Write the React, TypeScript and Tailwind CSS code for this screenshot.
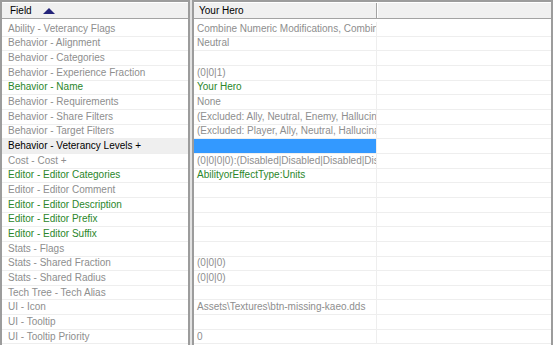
const GRAY = 'text-[#8e8e8e]'
const GREEN = 'text-[#2a862a]'

type Row = { field: string; value: string; changed?: boolean; selected?: boolean }

const ROWS: Row[] = [
  { field: 'Ability - Veterancy Flags', value: 'Combine Numeric Modifications, Combine Numeric Modifications' },
  { field: 'Behavior - Alignment', value: 'Neutral' },
  { field: 'Behavior - Categories', value: '' },
  { field: 'Behavior - Experience Fraction', value: '(0|0|1)' },
  { field: 'Behavior - Name', value: 'Your Hero', changed: true },
  { field: 'Behavior - Requirements', value: 'None' },
  { field: 'Behavior - Share Filters', value: '(Excluded: Ally, Neutral, Enemy, Hallucination)' },
  { field: 'Behavior - Target Filters', value: '(Excluded: Player, Ally, Neutral, Hallucination)' },
  { field: 'Behavior - Veterancy Levels +', value: '', selected: true },
  { field: 'Cost - Cost +', value: '(0|0|0|0):(Disabled|Disabled|Disabled|Disabled)' },
  { field: 'Editor - Editor Categories', value: 'AbilityorEffectType:Units', changed: true },
  { field: 'Editor - Editor Comment', value: '' },
  { field: 'Editor - Editor Description', value: '', changed: true },
  { field: 'Editor - Editor Prefix', value: '', changed: true },
  { field: 'Editor - Editor Suffix', value: '', changed: true },
  { field: 'Stats - Flags', value: '' },
  { field: 'Stats - Shared Fraction', value: '(0|0|0)' },
  { field: 'Stats - Shared Radius', value: '(0|0|0)' },
  { field: 'Tech Tree - Tech Alias', value: '' },
  { field: 'UI - Icon', value: 'Assets\\Textures\\btn-missing-kaeo.dds' },
  { field: 'UI - Tooltip', value: '' },
  { field: 'UI - Tooltip Priority', value: '0' },
]

function textColor(r: Row) {
  if (r.selected) return 'text-black'
  return r.changed ? GREEN : GRAY
}

export default function App() {
  return (
    <div
      className="w-[556px] h-[345px] overflow-hidden bg-white flex text-[10px] leading-none"
      style={{ fontFamily: '"Liberation Sans", Arial, sans-serif' }}
    >
      {/* field list */}
      <div className="w-[190px] shrink-0 flex flex-col border-l-2 border-r-2 border-t-2 border-[#9c9c9c]">
        <div className="h-[17px] shrink-0 flex items-center bg-[#f0f0f0] border-t border-white border-b border-b-[#a3a3a3] pl-[8px] text-black">
          <span>Field</span>
          <svg width="12" height="6" viewBox="0 0 12 6" className="ml-[11px]">
            <polygon points="0,6 6,0 12,6" fill="#24247a" />
          </svg>
        </div>
        <div className="pt-[3px] flex flex-col">
          {ROWS.map(r => (
            <div
              key={r.field}
              className={`h-[14.67px] shrink-0 flex items-center pl-[6px] border-b border-[#eeeeee] whitespace-nowrap overflow-hidden ${r.selected ? 'bg-[#efefef]' : ''} ${textColor(r)}`}
            >
              {r.field}
            </div>
          ))}
        </div>
      </div>

      <div className="w-[2px] shrink-0 bg-[#e2e2e2]" />

      {/* values */}
      <div className="w-[361px] shrink-0 flex flex-col border-l-2 border-r-2 border-t-2 border-[#9c9c9c]">
        <div className="h-[17px] shrink-0 flex bg-[#f0f0f0] border-t border-white border-b border-b-[#a3a3a3] text-black">
          <div className="w-[183px] shrink-0 flex items-center pl-[5px] border-r border-[#a3a3a3]">Your Hero</div>
          <div className="flex-1 border-l border-white" />
        </div>
        <div className="pt-[3px] flex flex-col">
          {ROWS.map(r => (
            <div key={r.field} className="h-[14.67px] shrink-0 flex border-b border-[#eeeeee]">
              <div
                className={`w-[183px] shrink-0 flex items-center pl-[3px] whitespace-nowrap overflow-hidden border-r border-[#eeeeee] ${r.selected ? 'bg-[#3399ff]' : ''} ${r.changed ? GREEN : GRAY}`}
              >
                {r.value}
              </div>
              <div className="flex-1" />
            </div>
          ))}
        </div>
      </div>
    </div>
  )
}
